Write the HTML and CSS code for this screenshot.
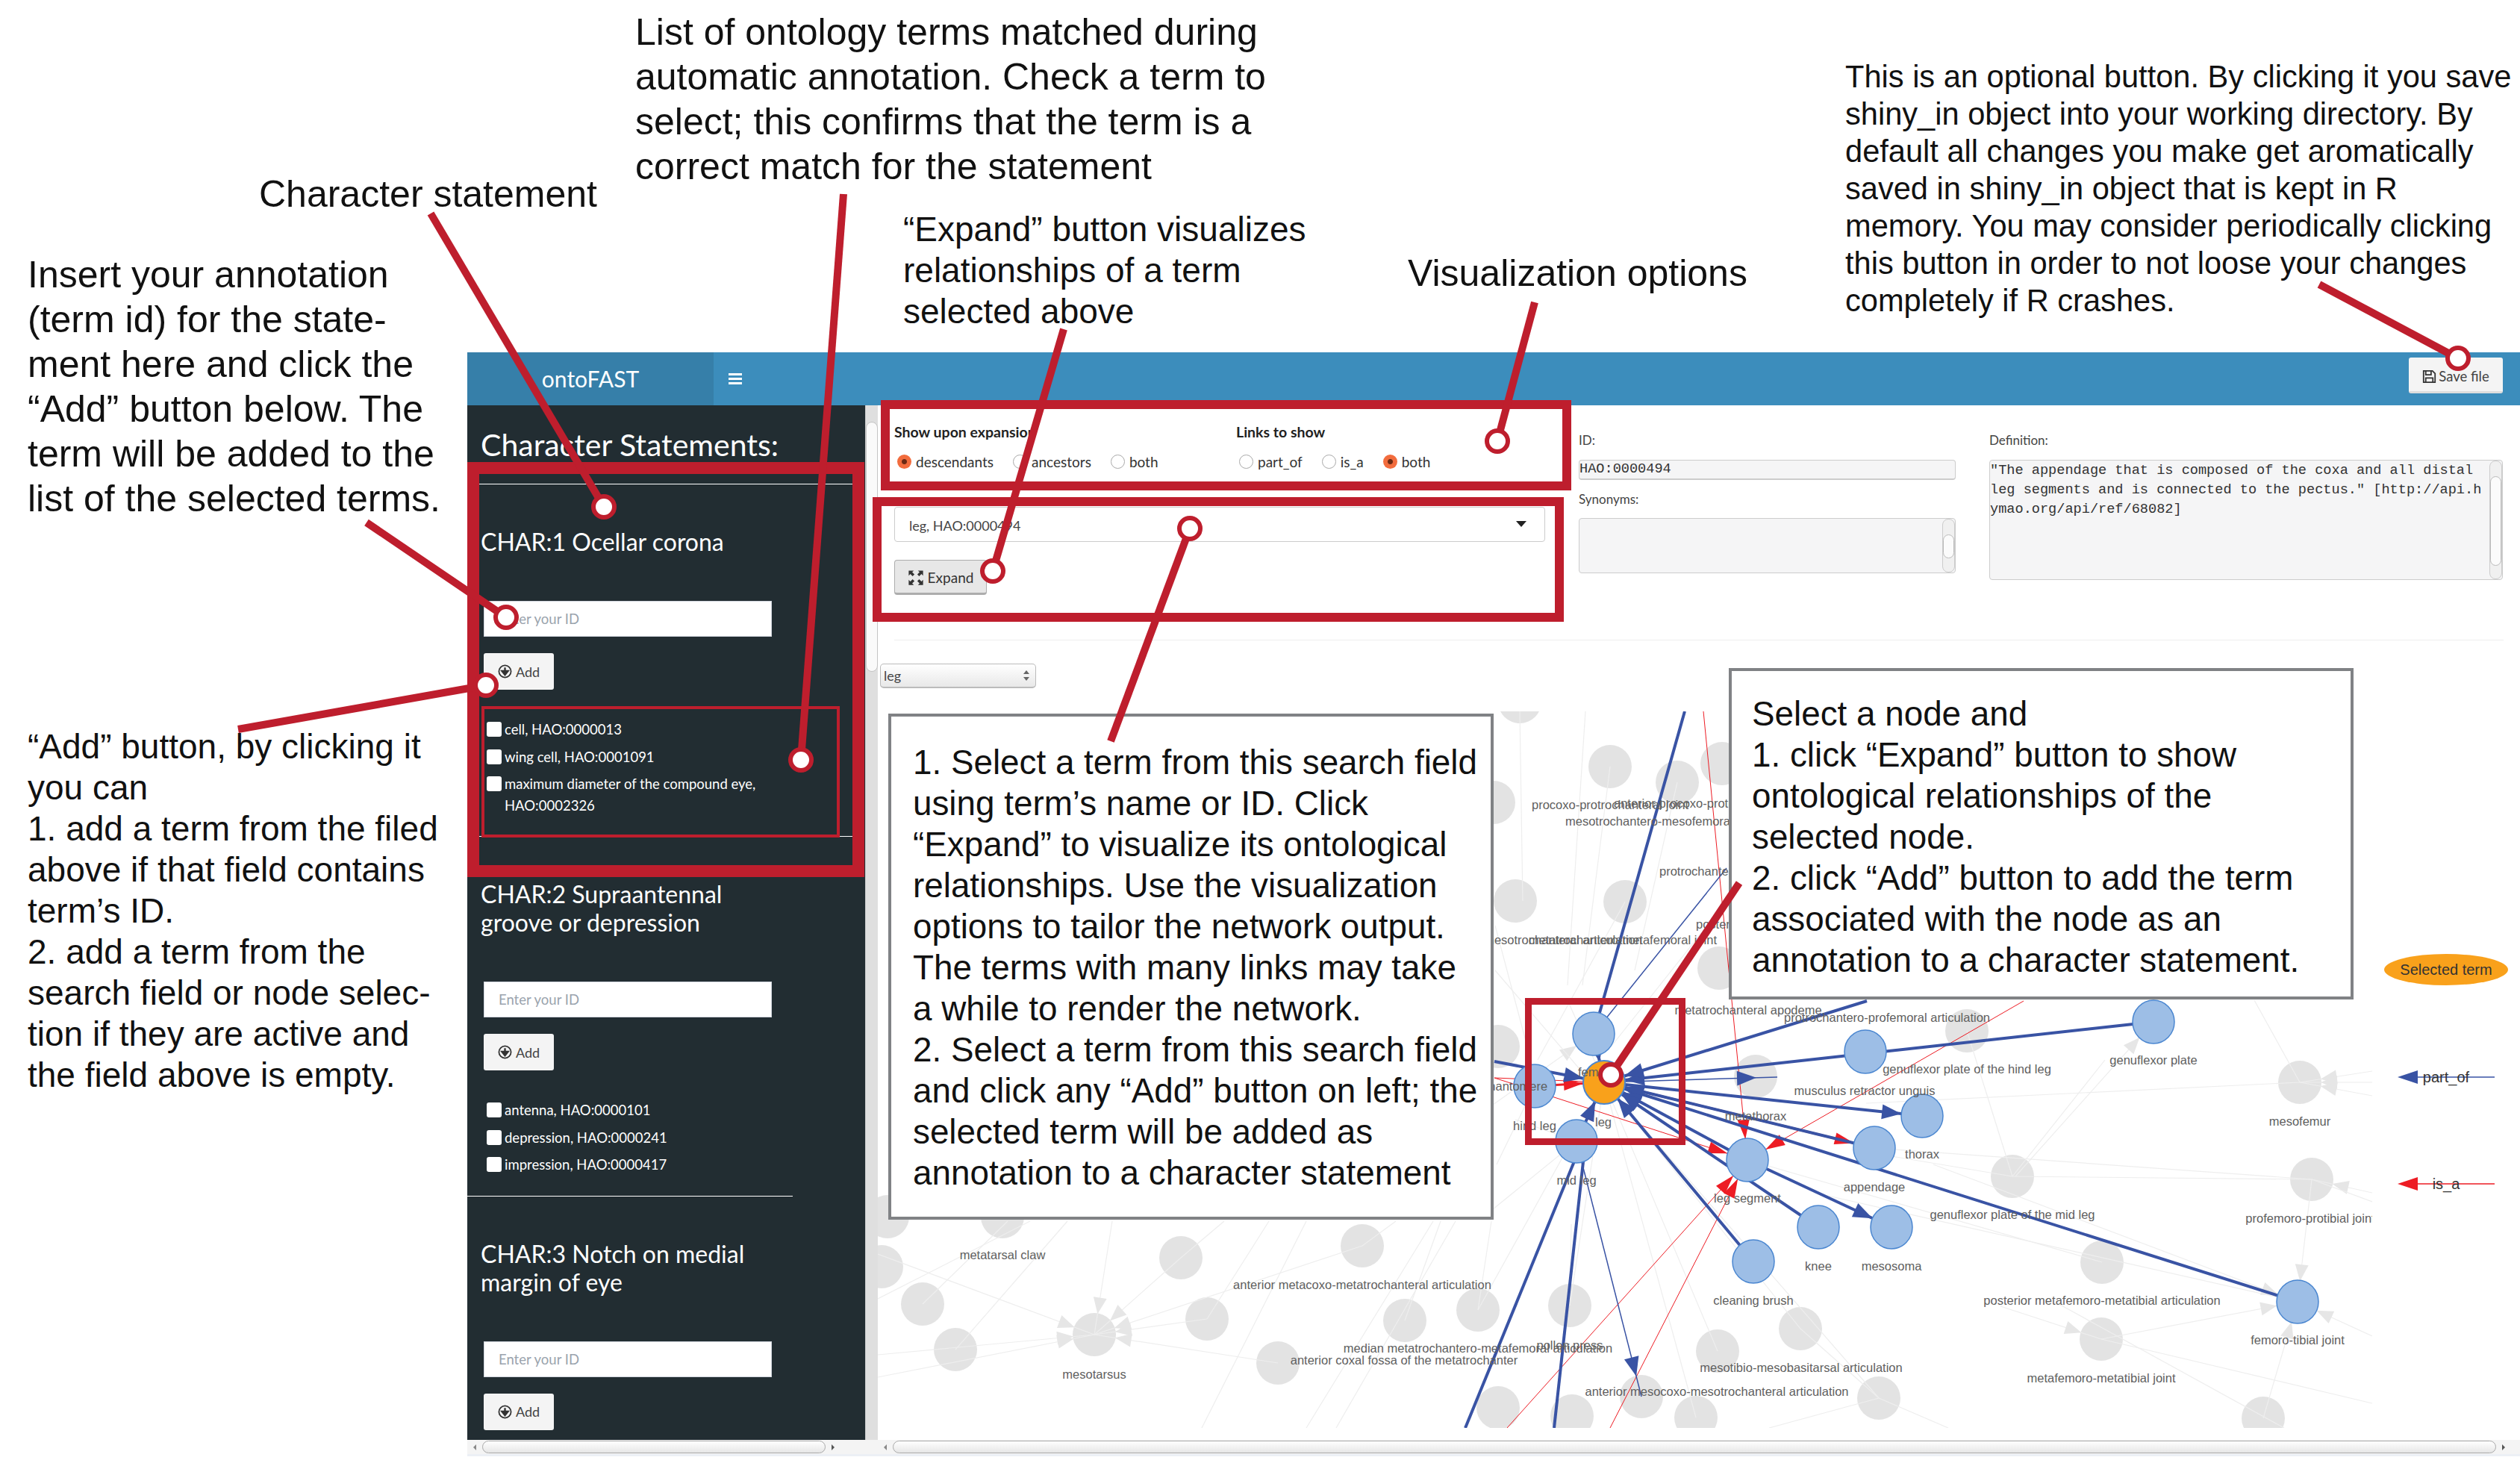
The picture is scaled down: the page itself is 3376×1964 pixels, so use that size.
FILE: index.html
```html
<!DOCTYPE html>
<html lang="en">
<head>
    <meta charset="UTF-8">
    <title>ontoFAST annotation interface</title>
    <link rel="stylesheet" href="styles.css">
</head>
<body>
<div class="figure">

    <!-- The app screenshot -->
    <div class="app">
        <header class="topbar">
            <div class="logo">ontoFAST</div>
            <div class="menu-toggle"><span></span><span></span><span></span></div>
            <button class="save-btn">
                <svg class="icon" viewBox="0 0 16 16"><path d="M1.5 1.5h10l3 3v10h-13z M4 2v4h6V2 M4 14.5v-5h8v5" fill="none" stroke="#333" stroke-width="1.5"/></svg>
                Save file
            </button>
        </header>

        <div class="app-body">
            <aside class="sidebar">
                <div class="sidebar-col">
                    <h2 class="sidebar-title">Character Statements:</h2>
                    <hr class="rule rule-first">

                    <section class="char">
                        <h3>CHAR:1 Ocellar corona</h3>
                        <input class="id-input" type="text" placeholder="Enter your ID">
                        <button class="add-btn">
                            <svg class="icon" viewBox="0 0 16 16"><circle cx="8" cy="8" r="6.8" fill="none" stroke="#333" stroke-width="1.5"/><path d="M8 3.5v5M4.6 7.5L8 11.8l3.4-4.3z" stroke="#333" stroke-width="2" fill="#333"/></svg>
                            Add
                        </button>
                        <ul class="terms">
                            <li><span class="check"></span><span>cell, HAO:0000013</span></li>
                            <li><span class="check"></span><span>wing cell, HAO:0001091</span></li>
                            <li><span class="check"></span><span>maximum diameter of the compound eye,<br>HAO:0002326</span></li>
                        </ul>
                    </section>
                    <hr class="rule rule-first">

                    <section class="char">
                        <h3>CHAR:2 Supraantennal<br>groove or depression</h3>
                        <input class="id-input" type="text" placeholder="Enter your ID">
                        <button class="add-btn">
                            <svg class="icon" viewBox="0 0 16 16"><circle cx="8" cy="8" r="6.8" fill="none" stroke="#333" stroke-width="1.5"/><path d="M8 3.5v5M4.6 7.5L8 11.8l3.4-4.3z" stroke="#333" stroke-width="2" fill="#333"/></svg>
                            Add
                        </button>
                        <ul class="terms">
                            <li><span class="check"></span><span>antenna, HAO:0000101</span></li>
                            <li><span class="check"></span><span>depression, HAO:0000241</span></li>
                            <li><span class="check"></span><span>impression, HAO:0000417</span></li>
                        </ul>
                    </section>
                    <hr class="rule">

                    <section class="char">
                        <h3>CHAR:3 Notch on medial<br>margin of eye</h3>
                        <input class="id-input" type="text" placeholder="Enter your ID">
                        <button class="add-btn">
                            <svg class="icon" viewBox="0 0 16 16"><circle cx="8" cy="8" r="6.8" fill="none" stroke="#333" stroke-width="1.5"/><path d="M8 3.5v5M4.6 7.5L8 11.8l3.4-4.3z" stroke="#333" stroke-width="2" fill="#333"/></svg>
                            Add
                        </button>
                    </section>
                </div>
                <div class="vscroll"><div class="vscroll-thumb"></div></div>
            </aside>

            <main class="main">
                <div class="top-panel">
                    <div class="controls">
                        <div class="option-groups">
                            <div class="option-group">
                                <div class="option-title">Show upon expansion</div>
                                <div class="radios">
                                    <label class="radio"><span class="dot on"></span>descendants</label>
                                    <label class="radio"><span class="dot"></span>ancestors</label>
                                    <label class="radio"><span class="dot"></span>both</label>
                                </div>
                            </div>
                            <div class="option-group">
                                <div class="option-title">Links to show</div>
                                <div class="radios">
                                    <label class="radio"><span class="dot"></span>part_of</label>
                                    <label class="radio"><span class="dot"></span>is_a</label>
                                    <label class="radio"><span class="dot on"></span>both</label>
                                </div>
                            </div>
                        </div>
                        <div class="term-select">leg, HAO:0000494<span class="caret"></span></div>
                        <button class="expand-btn">
                            <svg class="icon" viewBox="0 0 16 16"><path d="M1 1h5L4.4 2.6 6.6 4.8 4.8 6.6 2.6 4.4 1 6z M15 1v5l-1.6-1.6-2.2 2.2-1.8-1.8 2.2-2.2L10 1z M1 15v-5l1.6 1.6 2.2-2.2 1.8 1.8-2.2 2.2L6 15z M15 15h-5l1.6-1.6-2.2-2.2 1.8-1.8 2.2 2.2L15 10z" fill="#333"/></svg>
                            Expand
                        </button>
                    </div>

                    <div class="details">
                        <label class="detail-label">ID:</label>
                        <div class="detail-box id-box">HAO:0000494</div>
                        <label class="detail-label">Synonyms:</label>
                        <div class="detail-box syn-box"><div class="mini-scroll"><span></span></div></div>
                    </div>

                    <div class="details">
                        <label class="detail-label">Definition:</label>
                        <div class="detail-box def-box">"The appendage that is composed of the coxa and all distal<br>leg segments and is connected to the pectus." [http://api.h<br>ymao.org/api/ref/68082]<div class="mini-scroll"><span></span></div></div>
                    </div>
                </div>
                <hr class="main-rule">

                <div class="leg-select">leg<span class="spin"><i class="up"></i><i class="down"></i></span></div>

                <svg class="graph" viewBox="1176 953 2200 960" width="2200" height="960">
                    <defs>
                        <clipPath id="graph-clip"><rect x="1176" y="953" width="2002" height="960"/></clipPath>
                        <marker id="arrow-gray" markerUnits="userSpaceOnUse" markerWidth="22" markerHeight="18" refX="50" refY="9" orient="auto" overflow="visible"><path d="M0 0L22 9L0 18z" fill="#e6e6e6"/></marker>
                        <marker id="arrow-blue" markerUnits="userSpaceOnUse" markerWidth="26" markerHeight="20" refX="54" refY="10" orient="auto" overflow="visible"><path d="M0 0L26 10L0 20z" fill="#3953a4"/></marker>
                        <marker id="arrow-red" markerUnits="userSpaceOnUse" markerWidth="26" markerHeight="16" refX="54" refY="8" orient="auto" overflow="visible"><path d="M0 0L26 8L0 16z" fill="#ed1c24"/></marker>
                    </defs>

                    <g clip-path="url(#graph-clip)">
                        <!-- inactive nodes -->
                        <g class="node-gray">
                            <ellipse cx="1189" cy="1630" rx="29" ry="29"/><ellipse cx="1181" cy="1697" rx="29" ry="29"/>
                            <ellipse cx="1343" cy="1630" rx="29" ry="29"/><ellipse cx="1236" cy="1747" rx="29" ry="29"/>
                            <ellipse cx="1280" cy="1808" rx="29" ry="29"/><ellipse cx="1466" cy="1788" rx="29" ry="29"/>
                            <ellipse cx="1617" cy="1767" rx="29" ry="29"/><ellipse cx="1582" cy="1685" rx="29" ry="29"/>
                            <ellipse cx="1825" cy="1669" rx="29" ry="29"/><ellipse cx="1882" cy="1769" rx="29" ry="29"/>
                            <ellipse cx="1980" cy="1755" rx="29" ry="29"/><ellipse cx="2103" cy="1749" rx="29" ry="29"/>
                            <ellipse cx="1712" cy="1826" rx="29" ry="29"/><ellipse cx="2007" cy="1886" rx="29" ry="29"/>
                            <ellipse cx="2106" cy="1897" rx="29" ry="29"/><ellipse cx="2199" cy="1871" rx="29" ry="29"/>
                            <ellipse cx="2272" cy="1899" rx="29" ry="29"/><ellipse cx="2301" cy="1810" rx="29" ry="29"/>
                            <ellipse cx="2412" cy="1780" rx="29" ry="29"/><ellipse cx="2517" cy="1873" rx="29" ry="29"/>
                            <ellipse cx="2696" cy="1576" rx="29" ry="29"/><ellipse cx="2816" cy="1691" rx="29" ry="29"/>
                            <ellipse cx="2815" cy="1794" rx="29" ry="29"/><ellipse cx="3032" cy="1900" rx="29" ry="29"/>
                            <ellipse cx="3081" cy="1450" rx="29" ry="29"/><ellipse cx="3097" cy="1580" rx="29" ry="29"/>
                            <ellipse cx="2635" cy="1381" rx="29" ry="29"/><ellipse cx="2352" cy="1442" rx="29" ry="29"/>
                            <ellipse cx="2007" cy="1402" rx="29" ry="29"/><ellipse cx="2157" cy="1027" rx="29" ry="29"/>
                            <ellipse cx="2247" cy="1048" rx="29" ry="29"/><ellipse cx="2036" cy="940" rx="29" ry="29"/>
                            <ellipse cx="2001" cy="1075" rx="29" ry="29"/><ellipse cx="2030" cy="1207" rx="29" ry="29"/>
                            <ellipse cx="2177" cy="1208" rx="29" ry="29"/><ellipse cx="2307" cy="1023" rx="29" ry="29"/>
                            <ellipse cx="2303" cy="1297" rx="29" ry="29"/>
                        </g>

                        <!-- inactive edges -->
                        <g class="edge-gray">
                            <line x1="1176" y1="1815" x2="1466" y2="1788" marker-end="url(#arrow-gray)"/>
                            <line x1="1176" y1="1845" x2="1466" y2="1788" marker-end="url(#arrow-gray)"/>
                            <line x1="1176" y1="1680" x2="1466" y2="1788" marker-end="url(#arrow-gray)"/>
                            <line x1="1490" y1="1636" x2="1466" y2="1788" marker-end="url(#arrow-gray)"/>
                            <line x1="1582" y1="1685" x2="1466" y2="1788" marker-end="url(#arrow-gray)"/>
                            <line x1="1617" y1="1767" x2="1466" y2="1788" marker-end="url(#arrow-gray)"/>
                            <line x1="1825" y1="1669" x2="1466" y2="1788" marker-end="url(#arrow-gray)"/>
                            <line x1="1712" y1="1826" x2="1466" y2="1788" marker-end="url(#arrow-gray)"/>
                            <line x1="1280" y1="1808" x2="1430" y2="1636"/>
                            <line x1="1236" y1="1747" x2="1350" y2="1636"/>
                            <line x1="1176" y1="1740" x2="1380" y2="1636"/>
                            <line x1="1617" y1="1767" x2="1700" y2="1636"/>
                            <line x1="1825" y1="1669" x2="1870" y2="1636"/>
                            <line x1="1582" y1="1685" x2="1640" y2="1636"/>
                            <line x1="1610" y1="1913" x2="1750" y2="1636"/>
                            <line x1="1750" y1="1913" x2="1920" y2="1636"/>
                            <line x1="1790" y1="1913" x2="1950" y2="1636"/>
                            <line x1="1980" y1="1755" x2="1998" y2="1636"/>
                            <line x1="1882" y1="1769" x2="1930" y2="1636"/>
                            <line x1="2105" y1="1640" x2="2103" y2="1749"/>
                            <line x1="2149" y1="1450" x2="2103" y2="1749"/>
                            <line x1="2149" y1="1450" x2="2301" y2="1810"/>
                            <line x1="2149" y1="1450" x2="2412" y2="1780"/>
                            <line x1="2149" y1="1450" x2="2517" y2="1873"/>
                            <line x1="2149" y1="1450" x2="2272" y2="1899"/>
                            <line x1="2149" y1="1450" x2="1980" y2="1755"/>
                            <line x1="2112" y1="1529" x2="2000" y2="1620"/>
                            <line x1="2112" y1="1529" x2="2030" y2="1500"/>
                            <line x1="2056" y1="1455" x2="2005" y2="1560"/>
                            <line x1="2412" y1="1780" x2="2517" y2="1873"/>
                            <line x1="2517" y1="1873" x2="2370" y2="1913"/>
                            <line x1="2517" y1="1873" x2="2610" y2="1913"/>
                            <line x1="2696" y1="1576" x2="2635" y2="1381"/>
                            <line x1="2696" y1="1576" x2="2820" y2="1420"/>
                            <line x1="2696" y1="1576" x2="2480" y2="1540"/>
                            <line x1="2696" y1="1576" x2="3097" y2="1580"/>
                            <line x1="2511" y1="1538" x2="3097" y2="1580"/>
                            <line x1="2341" y1="1554" x2="2816" y2="1691"/>
                            <line x1="2590" y1="1560" x2="3078" y2="1744" marker-end="url(#arrow-gray)"/>
                            <line x1="2440" y1="1600" x2="3078" y2="1744"/>
                            <line x1="2815" y1="1794" x2="3078" y2="1744" marker-end="url(#arrow-gray)"/>
                            <line x1="2815" y1="1794" x2="3178" y2="1880"/>
                            <line x1="2760" y1="1748" x2="3060" y2="1913"/>
                            <line x1="2680" y1="1750" x2="2815" y2="1794" marker-end="url(#arrow-gray)"/>
                            <line x1="3097" y1="1580" x2="3078" y2="1744" marker-end="url(#arrow-gray)"/>
                            <line x1="3032" y1="1900" x2="3078" y2="1744" marker-end="url(#arrow-gray)"/>
                            <line x1="3178" y1="1790" x2="3078" y2="1744" marker-end="url(#arrow-gray)"/>
                            <line x1="3178" y1="1598" x2="3097" y2="1580" marker-end="url(#arrow-gray)"/>
                            <line x1="3178" y1="1610" x2="3097" y2="1580"/>
                            <line x1="3178" y1="1435" x2="3081" y2="1450" marker-end="url(#arrow-gray)"/>
                            <line x1="3178" y1="1450" x2="3081" y2="1450" marker-end="url(#arrow-gray)"/>
                            <line x1="3178" y1="1468" x2="3081" y2="1450" marker-end="url(#arrow-gray)"/>
                            <line x1="2500" y1="1478" x2="3081" y2="1450"/>
                            <line x1="3020" y1="1340" x2="3081" y2="1450"/>
                            <line x1="2700" y1="1576" x2="2885" y2="1369" marker-end="url(#arrow-gray)"/>
                            <line x1="2100" y1="1340" x2="2149" y2="1450"/>
                            <line x1="2000" y1="1480" x2="2135" y2="1385" marker-end="url(#arrow-gray)"/>
                            <line x1="2036" y1="953" x2="2040" y2="1207"/>
                            <line x1="2157" y1="1027" x2="2120" y2="1320"/>
                            <line x1="2124" y1="953" x2="2100" y2="1320"/>
                            <line x1="2003" y1="1300" x2="2140" y2="1460"/>
                            <line x1="2177" y1="1208" x2="2060" y2="1420"/>
                            <line x1="2303" y1="1220" x2="2160" y2="1400"/>
                            <line x1="2247" y1="1048" x2="2190" y2="1300"/>
                            <line x1="2003" y1="1240" x2="2060" y2="1455"/>
                        </g>

                        <!-- edges of the selected term -->
                        <g class="edge-red">
                            <line x1="2282" y1="953" x2="2341" y2="1554" marker-end="url(#arrow-red)"/>
                            <line x1="2711" y1="1341" x2="2341" y2="1554" marker-end="url(#arrow-red)"/>
                            <line x1="2019" y1="1913" x2="2341" y2="1554" marker-end="url(#arrow-red)"/>
                            <line x1="2157" y1="1913" x2="2341" y2="1554" marker-end="url(#arrow-red)"/>
                            <line x1="2002" y1="1444" x2="2341" y2="1554" marker-end="url(#arrow-red)"/>
                            <line x1="2002" y1="1444" x2="2149" y2="1450"/>
                        </g>
                        <line class="edge-red-thick" x1="2149" y1="1450" x2="2511" y2="1538" marker-end="url(#arrow-red)"/>
                        <line class="edge-red-thick" x1="2056" y1="1455" x2="2149" y2="1450" marker-end="url(#arrow-red)"/>
                        <line class="edge-red-thick" x1="2112" y1="1529" x2="2149" y2="1450" marker-end="url(#arrow-red)"/>

                        <g class="edge-blue">
                            <line x1="2885" y1="1369" x2="2149" y2="1450" marker-end="url(#arrow-blue)"/>
                            <line x1="2501" y1="1341" x2="2149" y2="1450" marker-end="url(#arrow-blue)"/>
                            <line x1="3078" y1="1744" x2="2149" y2="1450" marker-end="url(#arrow-blue)"/>
                            <line x1="2511" y1="1538" x2="2149" y2="1450" marker-end="url(#arrow-blue)"/>
                            <line x1="2341" y1="1554" x2="2149" y2="1450" marker-end="url(#arrow-blue)"/>
                            <line x1="2436" y1="1644" x2="2149" y2="1450" marker-end="url(#arrow-blue)"/>
                            <line x1="2349" y1="1690" x2="2149" y2="1450" marker-end="url(#arrow-blue)"/>
                            <line x1="2149" y1="1450" x2="2575" y2="1495" marker-end="url(#arrow-blue)"/>
                            <line x1="2341" y1="1554" x2="2534" y2="1644" marker-end="url(#arrow-blue)"/>
                            <line x1="2002" y1="1422" x2="2149" y2="1450" marker-end="url(#arrow-blue)"/>
                            <line x1="2112" y1="1529" x2="2149" y2="1450" marker-end="url(#arrow-blue)"/>
                            <line x1="2135" y1="1385" x2="2149" y2="1450" marker-end="url(#arrow-blue)"/>
                            <line x1="2257" y1="953" x2="2135" y2="1385"/>
                            <line x1="2120" y1="1529" x2="1963" y2="1913"/>
                            <line x1="2124" y1="1529" x2="2082" y2="1913"/>
                        </g>
                        <g class="edge-blue-thin">
                            <line x1="2149" y1="1450" x2="2381" y2="1443" marker-end="url(#arrow-blue)"/>
                            <line x1="2112" y1="1529" x2="2199" y2="1871" marker-end="url(#arrow-blue)"/>
                            <line x1="2313" y1="1163" x2="2135" y2="1385"/>
                        </g>

                        <!-- active nodes -->
                        <g class="node-blue">
                            <ellipse cx="2135" cy="1385" rx="28" ry="29"/><ellipse cx="2056" cy="1455" rx="28" ry="29"/>
                            <ellipse cx="2112" cy="1529" rx="28" ry="29"/><ellipse cx="2499" cy="1409" rx="28" ry="29"/>
                            <ellipse cx="2575" cy="1495" rx="28" ry="29"/><ellipse cx="2511" cy="1538" rx="28" ry="29"/>
                            <ellipse cx="2341" cy="1554" rx="28" ry="29"/><ellipse cx="2436" cy="1644" rx="28" ry="29"/>
                            <ellipse cx="2534" cy="1644" rx="28" ry="29"/><ellipse cx="2349" cy="1690" rx="28" ry="29"/>
                            <ellipse cx="2885" cy="1369" rx="28" ry="29"/><ellipse cx="3078" cy="1744" rx="28" ry="29"/>
                        </g>
                        <ellipse class="node-orange" cx="2149" cy="1450" rx="28" ry="29"/>

                        <!-- node labels -->
                        <g class="node-label">
                            <text x="1343" y="1687">metatarsal claw</text>
                            <text x="1466" y="1847">mesotarsus</text>
                            <text x="1825" y="1727">anterior metacoxo-metatrochanteral articulation</text>
                            <text x="1980" y="1812">median metatrochantero-metafemoral articulation</text>
                            <text x="1881" y="1828">anterior coxal fossa of the metatrochanter</text>
                            <text x="2103" y="1808">pollen press</text>
                            <text x="2300" y="1870">anterior mesocoxo-mesotrochanteral articulation</text>
                            <text x="2413" y="1838">mesotibio-mesobasitarsal articulation</text>
                            <text x="2349" y="1748">cleaning brush</text>
                            <text x="2436" y="1702">knee</text>
                            <text x="2534" y="1702">mesosoma</text>
                            <text x="2341" y="1611">leg segment</text>
                            <text x="2511" y="1596">appendage</text>
                            <text x="2575" y="1552">thorax</text>
                            <text x="2352" y="1501">metathorax</text>
                            <text x="2498" y="1467">musculus retractor unguis</text>
                            <text x="2635" y="1438">genuflexor plate of the hind leg</text>
                            <text x="2528" y="1369">protrochantero-profemoral articulation</text>
                            <text x="2342" y="1359">metatrochanteral apodeme</text>
                            <text x="2885" y="1426">genuflexor plate</text>
                            <text x="3081" y="1508">mesofemur</text>
                            <text x="3095" y="1638">profemoro-protibial joint</text>
                            <text x="2696" y="1633">genuflexor plate of the mid leg</text>
                            <text x="2816" y="1748">posterior metafemoro-metatibial articulation</text>
                            <text x="3078" y="1801">femoro-tibial joint</text>
                            <text x="2815" y="1852">metafemoro-metatibial joint</text>
                            <text x="2056" y="1514">hind leg</text>
                            <text x="2148" y="1509">leg</text>
                            <text x="2112" y="1587">mid leg</text>
                            <text x="2135" y="1442">femur</text>
                            <text x="2020" y="1461">trochantomere</text>
                            <text x="2157" y="1084">procoxo-protrochanteral joint</text>
                            <text class="from-left" x="2162" y="1082">anterior procoxo-protrochanteral articulation</text>
                            <text class="from-left" x="2097" y="1106">mesotrochantero-mesofemoral articulation</text>
                            <text class="from-left" x="2223" y="1173">protrochanter</text>
                            <text class="from-left" x="2272" y="1244">posterior procoxal</text>
                            <text class="from-right" x="2300" y="1265">metatrochantero-metafemoral joint</text>
                            <text class="from-right" x="2200" y="1265">mesotrochanteral articulation</text>
                        </g>
                    </g>

                    <!-- legend -->
                    <ellipse class="legend-selected" cx="3277" cy="1299" rx="83" ry="21"/>
                    <text class="legend-text" x="3277" y="1306">Selected term</text>
                    <line class="legend-blue" x1="3225" y1="1443" x2="3342" y2="1443"/>
                    <path d="M3212 1443L3239 1434V1452z" fill="#3953a4"/>
                    <text class="legend-text" x="3277" y="1450">part_of</text>
                    <line class="legend-red" x1="3225" y1="1586" x2="3342" y2="1586"/>
                    <path d="M3212 1586L3239 1577V1595z" fill="#ed1c24"/>
                    <text class="legend-text" x="3277" y="1593">is_a</text>
                </svg>
            </main>
        </div>

        <div class="bottom-bars">
            <div class="hscroll hscroll-side"><span class="arrow-l"></span><div class="hthumb side-thumb"></div><span class="arrow-r"></span></div>
            <div class="hscroll hscroll-main"><span class="arrow-l"></span><div class="hthumb main-thumb"></div><span class="arrow-r"></span></div>
        </div>
    </div>

    <!-- Callouts laid over the screenshot -->
    <p class="callout c-char">Character statement</p>
    <p class="callout c-list">List of ontology terms matched during<br>automatic annotation. Check a term to<br>select; this confirms that the term is a<br>correct match for the statement</p>
    <p class="callout c-insert">Insert your annotation<br>(term id) for the state-<br>ment here and click the<br>“Add” button below. The<br>term will be added to the<br>list of the selected terms.</p>
    <p class="callout c-add">“Add” button, by clicking it<br>you can<br>1. add a term from the filed<br>above if that field contains<br>term’s ID.<br>2. add a term from the<br>search field or node selec-<br>tion if they are active and<br>the field above is empty.</p>
    <p class="callout c-expand">“Expand” button visualizes<br>relationships of a term<br>selected above</p>
    <p class="callout c-vis">Visualization options</p>
    <p class="callout c-save">This is an optional button. By clicking it you save<br>shiny_in object into your working directory. By<br>default all changes you make get aromatically<br>saved in shiny_in object that is kept in R<br>memory. You may consider periodically clicking<br>this button in order to not loose your changes<br>completely if R crashes.</p>

    <div class="note note-search">1. Select a term from this search field<br>using term’s name or ID. Click<br>“Expand” to visualize its ontological<br>relationships. Use the visualization<br>options to tailor the network output.<br>The terms with many links may take<br>a while to render the network.<br>2. Select a term from this search field<br>and click any “Add” button on left; the<br>selected term will be added as<br>annotation to a character statement</div>
    <div class="note note-node">Select a node and<br>1. click “Expand” button to show<br>ontological relationships of the<br>selected node.<br>2. click “Add” button to add the term<br>associated with the node as an<br>annotation to a character statement.</div>

    <svg class="marks" viewBox="0 0 3376 1964" width="3376" height="1964">
        <rect class="mark-box" x="634" y="627" width="516" height="540" stroke-width="16"/>
        <rect class="mark-box" x="647" y="948" width="476" height="172" stroke-width="4"/>
        <rect class="mark-box" x="1186" y="542" width="913" height="109" stroke-width="12"/>
        <rect class="mark-box" x="1175" y="672" width="914" height="155" stroke-width="12"/>
        <rect class="mark-box" x="2047.5" y="1341.5" width="206" height="188" stroke-width="9"/>

        <line class="lead" x1="577" y1="286" x2="809" y2="679"/>
        <line class="lead" x1="1130" y1="260" x2="1073" y2="1018"/>
        <line class="lead" x1="491" y1="700" x2="678" y2="827"/>
        <line class="lead" x1="319" y1="977" x2="651" y2="918"/>
        <line class="lead" x1="1425" y1="441" x2="1330" y2="765"/>
        <line class="lead" x1="2056" y1="405" x2="2006" y2="591"/>
        <line class="lead" x1="1488" y1="993" x2="1594" y2="708"/>
        <line class="lead" x1="3107" y1="381" x2="3293" y2="480"/>
        <line class="lead" x1="2330" y1="1183" x2="2158" y2="1440"/>

        <circle class="pin" cx="809" cy="679" r="14"/>
        <circle class="pin" cx="1073" cy="1018" r="14"/>
        <circle class="pin" cx="678" cy="827" r="14"/>
        <circle class="pin" cx="651" cy="918" r="14"/>
        <circle class="pin" cx="1330" cy="765" r="14"/>
        <circle class="pin" cx="2006" cy="591" r="14"/>
        <circle class="pin" cx="1594" cy="708" r="14"/>
        <circle class="pin" cx="3293" cy="480" r="14"/>
        <circle class="pin" cx="2158" cy="1440" r="14"/>
    </svg>
</div>
</body>
</html>
```

FILE: styles.css
```css
* {
    box-sizing: border-box;
}

html, body {
    margin: 0;
    padding: 0;
    background: #fff;
}

.figure {
    position: relative;
    width: 3376px;
    height: 1964px;
    padding: 472px 0 0 626px;
    overflow: hidden;
    font-family: "Lato", "Liberation Sans", sans-serif;
    color: #333;
}

/* App window */
.app {
    width: 2750px;
}

.topbar {
    display: flex;
    align-items: center;
    height: 71px;
    background: #3c8dbc;
}

.logo {
    width: 330px;
    height: 100%;
    display: flex;
    align-items: center;
    justify-content: center;
    padding-bottom: 2px;
    background: #367fa9;
    color: #fff;
    font-size: 30px;
}

.menu-toggle {
    display: flex;
    flex-direction: column;
    gap: 3px;
    margin-left: 20px;
}

.menu-toggle span {
    width: 18px;
    height: 3px;
    background: #fff;
}

.save-btn {
    display: flex;
    align-items: center;
    gap: 3px;
    margin-left: auto;
    margin-right: 23px;
    margin-bottom: 9px;
    width: 126px;
    height: 48px;
    justify-content: center;
    padding: 5px 0 0;
    background: #f4f4f4;
    border: 0;
    border-bottom: 3px solid #ddd;
    border-radius: 3px;
    font: 18.5px "Lato", sans-serif;
    color: #444;
}

.icon {
    width: 19px;
    height: 19px;
    flex: none;
}

.app-body {
    display: flex;
}

/* Sidebar */
.sidebar {
    display: flex;
    width: 550px;
    height: 1386px;
}

.sidebar-col {
    width: 533px;
    height: 100%;
    overflow: hidden;
    background: #222d32;
    color: #fff;
}

.sidebar-title {
    margin: 31px 0 30px 18px;
    font-size: 41px;
    line-height: 44px;
    font-weight: 400;
}

.rule {
    width: 436px;
    height: 1px;
    margin: 0;
    border: 0;
    background: #fff;
}

.rule-first {
    width: 516px;
    margin-left: 0;
}

.char h3 {
    margin: 58px 0 60px 18px;
    font-size: 32px;
    line-height: 38px;
    font-weight: 400;
}

.id-input {
    display: block;
    width: 386px;
    height: 48px;
    margin-left: 22px;
    padding: 0 19px;
    background: #fff;
    border: 1px solid #d2d6de;
    font: 18.5px "Lato", sans-serif;
}

.id-input::placeholder {
    color: #9aa3ad;
}

.add-btn {
    display: flex;
    align-items: center;
    justify-content: center;
    gap: 5px;
    width: 94px;
    height: 49px;
    margin: 22px 0 0 22px;
    padding: 0;
    background: #f4f4f4;
    border: 0;
    border-radius: 3px;
    font: 18px "Lato", sans-serif;
    color: #444;
}

.terms {
    margin: 35px 0 23px 26px;
    padding: 0;
    list-style: none;
    font-size: 18.5px;
    line-height: 28.5px;
}

.terms li {
    display: flex;
    gap: 4px;
    padding: 4px 0;
}

.check {
    flex: none;
    width: 20px;
    height: 20px;
    margin-top: 4px;
    background: #fff;
    border-radius: 3px;
}

.vscroll {
    width: 17px;
    height: 100%;
    padding-top: 22px;
    background: #dfdfdf;
    border-left: 1px solid #ccc;
}

.vscroll-thumb {
    height: 335px;
    background: #fafafa;
    border: 1px solid #c4c4c4;
    border-radius: 8px;
}

/* Main panel */
.main {
    width: 2200px;
    height: 1386px;
    background: #fff;
}

.top-panel {
    display: grid;
    grid-template-columns: 872px 505px 688px;
    column-gap: 45px;
    height: 314px;
    padding: 24px 0 0 22px;
}

.option-groups {
    display: grid;
    grid-template-columns: 458px 1fr;
}

.option-title {
    font-size: 19.5px;
    line-height: 24px;
    font-weight: 700;
    color: #222;
}

.radios {
    display: flex;
    gap: 26px;
    height: 26px;
    margin-top: 14px;
    padding-left: 4px;
}

.radio {
    display: flex;
    align-items: center;
    gap: 6px;
    font-size: 19px;
    color: #333;
}

.dot {
    width: 19px;
    height: 19px;
    border: 1px solid #aaa;
    border-radius: 50%;
    background: #fff;
}

.dot.on {
    border: 0;
    background: radial-gradient(circle, #6b2a14 0 3px, #f26c3d 4px);
}

.term-select {
    position: relative;
    height: 47px;
    margin-top: 48px;
    padding-left: 19px;
    border: 1px solid #ccc;
    border-radius: 4px;
    font-size: 18px;
    line-height: 48px;
    color: #444;
}

.caret {
    position: absolute;
    right: 24px;
    top: 18px;
    border: 7px solid transparent;
    border-top: 8px solid #222;
    border-bottom: 0;
}

.expand-btn {
    display: flex;
    align-items: center;
    justify-content: center;
    gap: 5px;
    width: 124px;
    height: 47px;
    margin-top: 24px;
    padding: 2px 0 0;
    background: #e7e7e7;
    border: 1px solid #adadad;
    border-bottom-width: 3px;
    border-radius: 4px;
    font: 19px "Lato", sans-serif;
    color: #333;
}

.expand-btn .icon {
    width: 22px;
    height: 22px;
}

.details {
    padding-top: 11px;
}

.detail-label {
    display: block;
    font-size: 17px;
    line-height: 24px;
    color: #444;
}

.detail-box {
    position: relative;
    margin-top: 14px;
    background: #f5f5f6;
    border: 1px solid #ccc;
    border-radius: 4px;
    font-family: "Liberation Mono", monospace;
    font-size: 18.6px;
    color: #333;
}

.id-box {
    height: 27px;
    margin-bottom: 14px;
    border-bottom-width: 2px;
    line-height: 24px;
}

.syn-box {
    height: 74px;
    margin-top: 13px;
}

.def-box {
    height: 161px;
    padding-top: 1px;
    line-height: 26px;
}

.mini-scroll {
    position: absolute;
    top: 0;
    right: 0;
    bottom: 0;
    width: 17px;
    padding-top: 20px;
    border: 1px solid #ccc;
    border-radius: 8px;
    background: #f0f0f0;
}

.mini-scroll span {
    display: block;
    background: #fbfbfb;
    border: 1px solid #bbb;
    border-radius: 8px;
}

.syn-box .mini-scroll span {
    height: 32px;
}

.def-box .mini-scroll span {
    height: 120px;
}

.main-rule {
    height: 1px;
    margin: 0 22px;
    border: 0;
    background: #eee;
}

.leg-select {
    position: relative;
    width: 209px;
    height: 33px;
    margin: 31px 0 0 3px;
    padding-left: 4px;
    background: linear-gradient(#fff, #e8e8e8);
    border: 1px solid #bbb;
    border-bottom-width: 2px;
    border-radius: 5px;
    font-size: 18px;
    line-height: 30px;
    color: #444;
}

.spin {
    position: absolute;
    right: 8px;
    top: 8px;
}

.spin i {
    display: block;
    margin-bottom: 4px;
    border: 4px solid transparent;
}

.spin .up {
    border-top: 0;
    border-bottom: 5px solid #666;
}

.spin .down {
    border-bottom: 0;
    border-top: 5px solid #666;
}

/* Network graph */
.graph {
    display: block;
    margin-top: 31px;
}

.node-gray ellipse {
    fill: #e3e3e3;
}

.edge-gray line {
    stroke: #eeeeee;
    stroke-width: 1.2;
}

.edge-red line {
    stroke: #ed1c24;
    stroke-width: 1;
}

.edge-red-thick {
    stroke: #ed1c24;
    stroke-width: 3;
}

.edge-blue line {
    stroke: #3953a4;
    stroke-width: 4;
}

.edge-blue-thin line {
    stroke: #3953a4;
    stroke-width: 1.5;
}

.node-blue ellipse {
    fill: #9dbee6;
    stroke: #4a86d0;
    stroke-width: 1.5;
}

.node-orange {
    fill: #f9a11b;
    stroke: #4a86d0;
    stroke-width: 2;
}

.node-label text {
    font: 16.5px "Liberation Sans", sans-serif;
    fill: #606060;
    text-anchor: middle;
}

.node-label .from-left {
    text-anchor: start;
}

.node-label .from-right {
    text-anchor: end;
}

.legend-selected {
    fill: #f9a11b;
}

.legend-text {
    font: 20px "Liberation Sans", sans-serif;
    fill: #333;
    text-anchor: middle;
}

.legend-blue {
    stroke: #3953a4;
    stroke-width: 1.5;
}

.legend-red {
    stroke: #ed1c24;
    stroke-width: 1.5;
}

/* Bottom scrollbars */
.bottom-bars {
    display: flex;
    height: 22px;
    border-bottom: 3px solid #ecf0f5;
}

.hscroll {
    display: flex;
    align-items: center;
    height: 19px;
    padding: 0 20px;
    background: #f4f4f4;
}

.hscroll-side {
    width: 550px;
    border-bottom: 0;
}

.hscroll-main {
    width: 2200px;
}

.hthumb {
    height: 17px;
    background: linear-gradient(#fff, #e6e6e6);
    border: 1px solid #a9a9a9;
    border-radius: 9px;
}

.side-thumb {
    width: 460px;
}

.main-thumb {
    width: 2150px;
}

.arrow-l, .arrow-r {
    flex: none;
    width: 0;
    height: 0;
    border: 4px solid transparent;
}

.arrow-l {
    margin-left: -12px;
    margin-right: 8px;
    border-left: 0;
    border-right-color: #888;
}

.arrow-r {
    margin-left: 8px;
    border-right: 0;
    border-left-color: #555;
}

/* Callouts */
.callout {
    position: absolute;
    margin: 0;
    font-family: "Liberation Sans", Arial, sans-serif;
    font-size: 50px;
    line-height: 60px;
    color: #111;
    white-space: nowrap;
}

.c-char {
    left: 347px;
    top: 230px;
}

.c-list {
    left: 851px;
    top: 13px;
}

.c-insert {
    left: 37px;
    top: 338px;
}

.c-add {
    left: 37px;
    top: 973px;
    font-size: 46px;
    line-height: 55px;
}

.c-expand {
    left: 1210px;
    top: 280px;
    font-size: 46px;
    line-height: 55px;
}

.c-vis {
    left: 1886px;
    top: 336px;
}

.c-save {
    left: 2472px;
    top: 78px;
    font-size: 41.6px;
    line-height: 50px;
}

.note {
    position: absolute;
    background: #fff;
    border: 4px solid #808285;
    font-family: "Liberation Sans", Arial, sans-serif;
    font-size: 45.8px;
    line-height: 55px;
    color: #111;
    white-space: nowrap;
}

.note-search {
    left: 1190px;
    top: 956px;
    width: 811px;
    height: 678px;
    padding: 34px 0 0 29px;
}

.note-node {
    left: 2316px;
    top: 895px;
    width: 837px;
    height: 444px;
    padding: 30px 0 0 27px;
}

/* Red markup layer */
.marks {
    position: absolute;
    left: 0;
    top: 0;
    pointer-events: none;
}

.mark-box {
    fill: none;
    stroke: #be1e2d;
}

.lead {
    stroke: #be1e2d;
    stroke-width: 10;
}

.pin {
    fill: #fff;
    stroke: #be1e2d;
    stroke-width: 6;
}
```
